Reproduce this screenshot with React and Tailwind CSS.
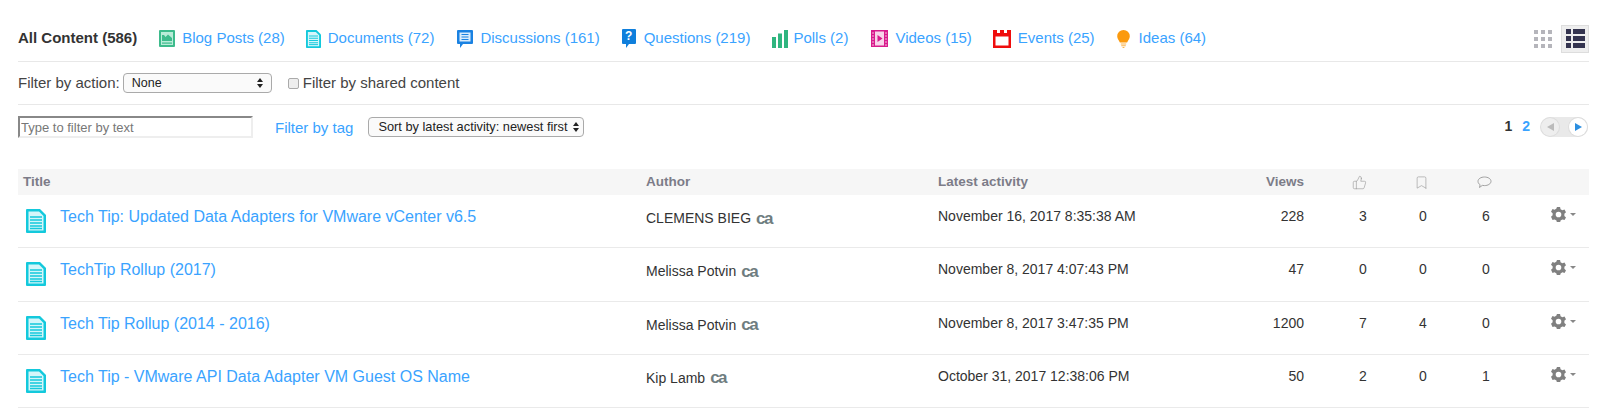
import { Bookmark, ThumbsUp } from "lucide-react";

const FONT = "font-['Liberation_Sans',Arial,sans-serif]";

function BlogIcon() {
  return (
    <svg width="16" height="17" viewBox="0 0 16 17">
      <rect width="16" height="17" rx="1" fill="#3dbb8c" />
      <rect x="2" y="2" width="12" height="13" fill="#b9ecd8" />
      <path d="M3 11V5h2l1.500 2L9 4.500 13 8v3z" fill="#3dbb8c" />
      <rect x="3" y="12.500" width="10" height="1.200" fill="#3dbb8c" />
    </svg>
  );
}

function DocIcon({ w = 15, h = 18 }) {
  return (
    <svg width={w} height={h} viewBox="0 0 20 24">
      <path d="M0 1a1 1 0 0 1 1-1h13l6 6v17a1 1 0 0 1-1 1H1a1 1 0 0 1-1-1z" fill="#13c9dc" />
      <path d="M2.500 2.500h10.500l4.500 4.500v14.500h-15z" fill="#d5f6fa" />
      <path d="M4 8h12M4 11h12M4 14h12M4 17h12M4 19.500h12" stroke="#13c9dc" strokeWidth="1.300" />
    </svg>
  );
}

function DiscussionIcon() {
  return (
    <svg width="16" height="18" viewBox="0 0 16 18">
      <path d="M1 0h14a1 1 0 0 1 1 1v12a1 1 0 0 1-1 1H6l-3 4v-4H1a1 1 0 0 1-1-1V1a1 1 0 0 1 1-1z" fill="#1a82e2" />
      <rect x="2.500" y="2.500" width="11" height="9" fill="#d9ecfc" />
      <path d="M4.500 4.500h7M4.500 7h7M4.500 9.500h7" stroke="#1a82e2" strokeWidth="1.100" />
    </svg>
  );
}

function QuestionIcon() {
  return (
    <div className="relative h-[19px] w-[14px]">
      <svg width="14" height="19" viewBox="0 0 14 19">
        <path d="M1 0h12a1 1 0 0 1 1 1v13a1 1 0 0 1-1 1H7l-3 4v-4H1a1 1 0 0 1-1-1V1a1 1 0 0 1 1-1z" fill="#0f7fdc" />
      </svg>
      <span className="absolute inset-x-0 top-0 text-center text-[12px] leading-[14px] font-bold text-white">?</span>
    </div>
  );
}

function PollIcon() {
  return (
    <svg width="16" height="18" viewBox="0 0 16 18">
      <rect y="7" width="4" height="11" fill="#2fb57f" />
      <rect x="6" y="3.500" width="4" height="14.500" fill="#2fb57f" />
      <rect x="12" width="4" height="18" fill="#2fb57f" />
    </svg>
  );
}

function VideoIcon() {
  return (
    <svg width="17" height="17" viewBox="0 0 17 17">
      <rect width="17" height="17" fill="#d81b8c" />
      <rect x="4" y="1.500" width="9" height="14" fill="#f8d5ea" />
      <path d="M6.500 5l5 3.500-5 3.500z" fill="#d81b8c" />
      <path d="M1 3h2M1 6h2M1 9h2M1 12h2M1 15h2M14 3h2M14 6h2M14 9h2M14 12h2M14 15h2" stroke="#f7b9dd" strokeWidth="1" />
    </svg>
  );
}

function EventIcon() {
  return (
    <svg width="18" height="18" viewBox="0 0 18 18">
      <path d="M0 0h4v3h3V0h4v3h3V0h4v18H0z" fill="#ef0d0d" />
      <rect x="2.500" y="6.500" width="13" height="9" fill="#fff" />
    </svg>
  );
}

function IdeaIcon() {
  return (
    <svg width="13" height="18" viewBox="0 0 14 20">
      <path d="M7 0a7 7 0 0 1 7 7c0 3-2 4.500-3 7H3C2 11.500 0 10 0 7a7 7 0 0 1 7-7z" fill="#fb9a0e" />
      <path d="M4 15.500h6M4.500 17.500h5M6 19.500h2" stroke="#fbb54e" strokeWidth="1.200" />
    </svg>
  );
}

const TABS = [
  { label: "Blog Posts (28)", icon: <BlogIcon />, cls: "ml-[22px] gap-[7px]" },
  { label: "Documents (72)", icon: <DocIcon />, cls: "ml-[21px] gap-[7px]" },
  { label: "Discussions (161)", icon: <DiscussionIcon />, cls: "ml-[23px] gap-[7px]" },
  { label: "Questions (219)", icon: <QuestionIcon />, cls: "ml-[22px] gap-[8px]" },
  { label: "Polls (2)", icon: <PollIcon />, cls: "ml-[22px] gap-[5px]" },
  { label: "Videos (15)", icon: <VideoIcon />, cls: "ml-[23px] gap-[7px]" },
  { label: "Events (25)", icon: <EventIcon />, cls: "ml-[21px] gap-[7px]" },
  { label: "Ideas (64)", icon: <IdeaIcon />, cls: "ml-[22px] gap-[9px]" },
];

const ROWS = [
  { title: "Tech Tip: Updated Data Adapters for VMware vCenter v6.5", author: "CLEMENS BIEG", date: "November 16, 2017 8:35:38 AM", views: 228, likes: 3, marks: 0, comments: 6 },
  { title: "TechTip Rollup (2017)", author: "Melissa Potvin", date: "November 8, 2017 4:07:43 PM", views: 47, likes: 0, marks: 0, comments: 0 },
  { title: "Tech Tip Rollup (2014 - 2016)", author: "Melissa Potvin", date: "November 8, 2017 3:47:35 PM", views: 1200, likes: 7, marks: 4, comments: 0 },
  { title: "Tech Tip - VMware API Data Adapter VM Guest OS Name", author: "Kip Lamb", date: "October 31, 2017 12:38:06 PM", views: 50, likes: 2, marks: 0, comments: 1 },
];

const COLS = "grid grid-cols-[623px_292px_285px_115px_60px_60px_66px_71px]";

function SelectArrows() {
  return (
    <svg width="6" height="10" viewBox="0 0 6 10" className="shrink-0">
      <path d="M3 0l3 4H0zM3 10L0 6h6z" fill="#222" />
    </svg>
  );
}

function Gear() {
  return (
    <svg width="15" height="15" viewBox="0 0 24 24" fill="#808080">
      <path
        fillRule="evenodd"
        d="M9.500 0h5l.8 3.500 2.900 1.700 3.400-1.100 2.400 4.300-2.600 2.400v3.400l2.600 2.400-2.400 4.300-3.400-1.100-2.900 1.700-.8 3.500h-5l-.8-3.500-2.900-1.700-3.400 1.100L0 15.600l2.600-2.400V9.800L0 7.400l2.400-4.300 3.400 1.100 2.900-1.700zM12 7.500a4.500 4.500 0 1 0 0 9 4.500 4.500 0 0 0 0-9z"
      />
    </svg>
  );
}

function CommentIcon() {
  return (
    <svg width="15" height="13" viewBox="0 0 15 13" fill="none" stroke="#999" strokeWidth="0.900">
      <path d="M7.500 1C11 1 14 2.800 14 5.300S11 9.600 7.500 9.600c-.8 0-1.500-.1-2.200-.2L2.500 11.500l.6-2.800C1.800 8 1 6.800 1 5.300 1 2.800 4 1 7.500 1z" />
    </svg>
  );
}

function GridIcon() {
  return (
    <div className="grid grid-cols-3 gap-[3px]">
      {Array.from({ length: 9 }).map((_, i) => (
        <span key={i} className="h-[4px] w-[4px] bg-[#b5b5bb]" />
      ))}
    </div>
  );
}

function ListIcon() {
  return (
    <div className="flex flex-col gap-[2px]">
      {[0, 1, 2].map((i) => (
        <div key={i} className="flex gap-[2px]">
          <span className="h-[5px] w-[5px] bg-[#34344f]" />
          <span className="h-[5px] w-[12px] bg-[#34344f]" />
        </div>
      ))}
    </div>
  );
}

export default function App() {
  return (
    <div className={`${FONT} h-[409px] w-[1597px] overflow-hidden bg-white pl-[18px] pr-[8px] text-[#333]`}>
      <div className="flex h-[62px] items-center border-b border-[#e8e8e8] pt-[16px]">
        <span className="text-[15px] font-bold text-[#333]">All Content (586)</span>
        {TABS.map((t) => (
          <a key={t.label} className={`${t.cls} flex items-center text-[15px] text-[#3aa3ff]`}>
            {t.icon}
            <span>{t.label}</span>
          </a>
        ))}
        <div className="ml-auto flex items-center gap-[9px]">
          <GridIcon />
          <div className="flex h-[28px] w-[28px] items-center justify-center border border-[#ddd] bg-[#eee]">
            <ListIcon />
          </div>
        </div>
      </div>

      <div className="flex h-[43px] items-center border-b border-[#e8e8e8] text-[15px] text-[#444]">
        <span>Filter by action:</span>
        <div className="ml-[3px] flex h-[20px] w-[149px] items-center justify-between rounded-[4px] border border-[#aaa] bg-[#fafafa] px-[8px] text-[12.500px] text-[#222]">
          None
          <SelectArrows />
        </div>
        <span className="ml-[16px] h-[11px] w-[11px] rounded-[2px] border border-[#aaa] bg-[#eee]" />
        <span className="ml-[4px]">Filter by shared content</span>
      </div>

      <div className="flex h-[64px] items-start pt-[11px]">
        <input
          placeholder="Type to filter by text"
          className="h-[22px] w-[235px] border-[2px] border-t-[#888] border-r-[#eee] border-b-[#eee] border-l-[#888] px-[1px] text-[13px] outline-none placeholder:text-[#777]"
        />
        <a className="ml-[22px] mt-[1px] text-[15px] text-[#3aa3ff]">Filter by tag</a>
        <div className="ml-[15px] mt-[1px] flex h-[20px] w-[216px] items-center justify-between rounded-[4px] border border-[#aaa] bg-[#fafafa] pl-[9px] pr-[4px] text-[12.800px] text-[#222]">
          Sort by latest activity: newest first
          <SelectArrows />
        </div>
        <div className="ml-auto mr-[1px] flex items-center">
          <span className="text-[14px] font-bold text-[#333]">1</span>
          <span className="ml-[10px] text-[14px] font-bold text-[#3aa3ff]">2</span>
          <div className="ml-[11px] flex h-[20px] w-[47px] items-center justify-between rounded-full bg-[#e9e9e9] pr-[1px]">
            <span className="flex h-[18px] w-[18px] items-center justify-center rounded-full bg-[#eee] ring-1 ring-[#ddd]">
              <svg width="7" height="8" viewBox="0 0 7 8"><path d="M7 0v8L0 4z" fill="#bbb" /></svg>
            </span>
            <span className="flex h-[18px] w-[18px] items-center justify-center rounded-full bg-white ring-1 ring-[#ddd]">
              <svg width="7" height="8" viewBox="0 0 7 8"><path d="M0 0v8l7-4z" fill="#2c8fe0" /></svg>
            </span>
          </div>
        </div>
      </div>

      <div className={`${COLS} h-[26px] items-center bg-[#f6f6f6] text-[13.500px] font-bold text-[#7c7c88]`}>
        <span className="pl-[5px]">Title</span>
        <span className="pl-[5px]">Author</span>
        <span className="pl-[5px]">Latest activity</span>
        <span className="pr-[29px] text-right">Views</span>
        <span className="flex justify-center pr-[8px] text-[#999]"><ThumbsUp size={15} strokeWidth={1} /></span>
        <span className="flex justify-center pr-[4px] text-[#999]"><Bookmark size={15} strokeWidth={1} /></span>
        <span className="flex justify-center pr-[4px]"><CommentIcon /></span>
        <span />
      </div>

      {ROWS.map((r) => (
        <div key={r.title} className={`${COLS} h-[53.330px] items-start border-b border-[#eaeaea] text-[14px] text-[#333]`}>
          <div className="flex items-start pl-[8px] pt-[14px]">
            <DocIcon w={20} h={24} />
            <a className="ml-[14px] mt-[-4px] text-[16px] text-[#3aa3ff]">{r.title}</a>
          </div>
          <div className="flex items-center pl-[5px] pt-[13px]">
            {r.author}
            <span className="ml-[5px] text-[17px] leading-[16px] font-bold tracking-[-1.500px] text-[#6f7d80]">ca</span>
          </div>
          <span className="pl-[5px] pt-[11px]">{r.date}</span>
          <span className="pr-[29px] pt-[11px] text-right">{r.views}</span>
          <span className="pt-[11px] text-center">{r.likes}</span>
          <span className="pt-[11px] text-center">{r.marks}</span>
          <span className="pt-[11px] text-center">{r.comments}</span>
          <div className="flex items-center gap-[4px] pl-[32px] pt-[12px]">
            <Gear />
            <svg width="6" height="3" viewBox="0 0 6 3"><path d="M0 0h6L3 3z" fill="#888" /></svg>
          </div>
        </div>
      ))}
    </div>
  );
}
